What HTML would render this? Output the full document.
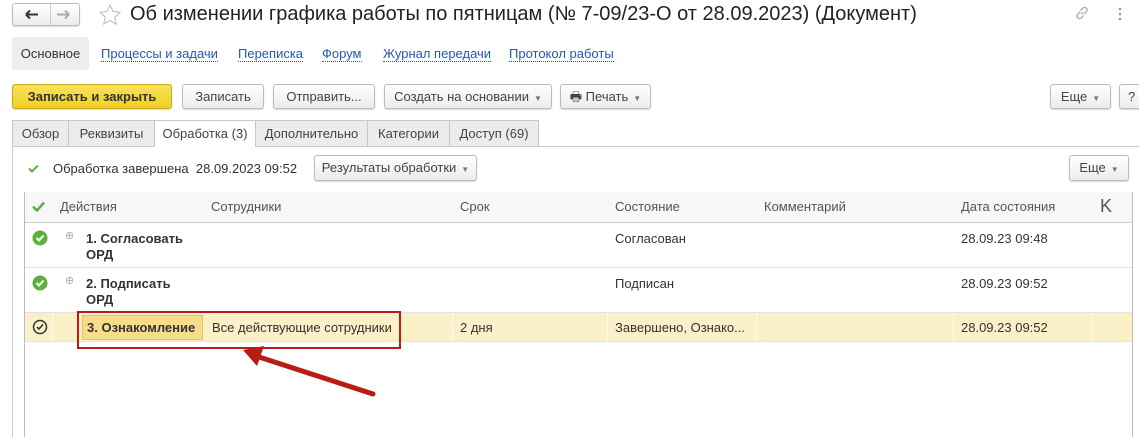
<!DOCTYPE html>
<html><head><meta charset="utf-8"><style>
*{box-sizing:border-box;margin:0;padding:0}
body{width:1139px;height:437px;overflow:hidden;background:#fff;font-family:"Liberation Sans",Arial,sans-serif;font-size:13px;color:#333;position:relative}
.a{position:absolute;white-space:nowrap}
.btn{position:absolute;border:1px solid #bbb;border-radius:3px;background:linear-gradient(#fff,#ececec);box-shadow:0 1px 1px rgba(0,0,0,.15);text-align:center;color:#444;font-size:13px}
.lnk{position:absolute;color:#1e5ab4;border-bottom:1px dotted #1e5ab4;line-height:14px;font-size:13px}
.tab{position:absolute;top:120px;height:27px;border:1px solid #c8c8c8;background:#ececec;line-height:25px;text-align:center;color:#444}
.hd{position:absolute;top:192px;height:30px;border-right:1px solid #ddd;line-height:29px;padding-left:8px;color:#555;background:#f7f7f7}
.dd{font-size:8px;color:#777;margin-left:5px}
</style></head><body>
<div class="btn" style="left:12px;top:3px;width:68px;height:23px">
<svg style="position:absolute;left:0;top:0" width="66" height="21" viewBox="0 0 66 21"><path d="M13 10.5h12M13 10.5l4-4M13 10.5l4 4" stroke="#333" stroke-width="2" fill="none"/><line x1="37.5" y1="0" x2="37.5" y2="21" stroke="#ccc"/><path d="M44 10.5h12M56 10.5l-4-4M56 10.5l-4 4" stroke="#aaa" stroke-width="2" fill="none"/></svg></div>
<svg class="a" style="left:99px;top:4px" width="22" height="21" viewBox="0 0 22 21"><path d="M11 1l3 6.5 7 .8-5.2 4.8 1.5 7L11 16.6 4.7 20.1l1.5-7L1 8.3l7-.8z" fill="none" stroke="#bbb" stroke-width="1"/></svg>
<div class="a" style="left:130px;top:3px;font-size:20px;color:#222">Об изменении графика работы по пятницам (№ 7-09/23-О от 28.09.2023) (Документ)</div>
<svg class="a" style="left:1074px;top:5px" width="16" height="16" viewBox="0 0 16 16"><path d="M7 9l2-2M6 7L3.5 9.5a2.5 2.5 0 003.5 3.5L9.5 10.5M10 9l2.5-2.5A2.5 2.5 0 009 3L6.5 5.5" fill="none" stroke="#aaa" stroke-width="1.3"/></svg>
<svg class="a" style="left:1118px;top:7px" width="4" height="14"><circle cx="2" cy="2" r="1.3" fill="#999"/><circle cx="2" cy="7" r="1.3" fill="#999"/><circle cx="2" cy="12" r="1.3" fill="#999"/></svg>
<div class="a" style="left:12px;top:37px;width:77px;height:33px;background:#eee;border-radius:3px;line-height:33px;text-align:center;color:#333">Основное</div>
<span class="lnk" style="left:101px;top:47px">Процессы и задачи</span>
<span class="lnk" style="left:238px;top:47px">Переписка</span>
<span class="lnk" style="left:322px;top:47px">Форум</span>
<span class="lnk" style="left:383px;top:47px">Журнал передачи</span>
<span class="lnk" style="left:509px;top:47px">Протокол работы</span>
<div class="btn" style="left:12px;top:84px;width:160px;height:25px;line-height:23px;background:linear-gradient(#f8e25a,#f1cf22);border-color:#c9ac19;font-weight:bold;color:#333">Записать и закрыть</div>
<div class="btn" style="left:182px;top:84px;width:82px;height:25px;line-height:23px">Записать</div>
<div class="btn" style="left:273px;top:84px;width:102px;height:25px;line-height:23px">Отправить...</div>
<div class="btn" style="left:384px;top:84px;width:168px;height:25px;line-height:23px">Создать на основании<span class="dd">▼</span></div>
<div class="btn" style="left:560px;top:84px;width:91px;height:25px;line-height:23px">🖶 Печать<span class="dd">▼</span></div>
<div class="btn" style="left:1050px;top:84px;width:61px;height:25px;line-height:23px">Еще<span class="dd">▼</span></div>
<div class="btn" style="left:1119px;top:84px;width:30px;height:25px;line-height:23px;text-align:left;padding-left:8px">?</div>
<div class="a" style="left:255px;top:146px;width:884px;height:1px;background:#c8c8c8"></div>
<div class="a" style="left:12px;top:146px;width:1px;height:291px;background:#c8c8c8"></div>
<div class="tab" style="left:12px;width:57px">Обзор</div>
<div class="tab" style="left:68px;width:87px">Реквизиты</div>
<div class="tab" style="left:154px;width:102px;background:#fff;border-bottom-color:#fff">Обработка (3)</div>
<div class="tab" style="left:255px;width:113px">Дополнительно</div>
<div class="tab" style="left:367px;width:83px">Категории</div>
<div class="tab" style="left:449px;width:90px">Доступ (69)</div>
<svg class="a" style="left:28px;top:164px" width="11" height="9"><path d="M1 4.5l3 3 6-6" stroke="#5cb040" stroke-width="2" fill="none"/></svg>
<div class="a" style="left:53px;top:161px">Обработка завершена&nbsp; 28.09.2023 09:52</div>
<div class="btn" style="left:314px;top:155px;width:163px;height:26px;line-height:24px">Результаты обработки<span class="dd">▼</span></div>
<div class="btn" style="left:1069px;top:155px;width:60px;height:26px;line-height:24px">Еще<span class="dd">▼</span></div>
<div class="a" style="left:24px;top:192px;width:1109px;height:245px;border:1px solid #bbb;border-bottom:none"></div>
<div class="hd" style="left:25px;width:28px"></div>
<svg class="a" style="left:32px;top:201px" width="13" height="11"><path d="M1 5.5l4 4 7-8" stroke="#5cb040" stroke-width="2.5" fill="none"/></svg>
<div class="hd" style="left:52px;width:152px">Действия</div>
<div class="hd" style="left:203px;width:250px">Сотрудники</div>
<div class="hd" style="left:452px;width:156px">Срок</div>
<div class="hd" style="left:607px;width:150px">Состояние</div>
<div class="hd" style="left:756px;width:198px">Комментарий</div>
<div class="hd" style="left:953px;width:139px">Дата состояния</div>
<div class="hd" style="left:1091px;width:41px;font-size:18px;padding-left:9px;border-right:none">K</div>
<div class="a" style="left:25px;top:222px;width:1107px;height:1px;background:#ccc"></div>
<div class="a" style="left:25px;top:267px;width:1107px;height:1px;background:#e2e2e2"></div>
<div class="a" style="left:25px;top:312px;width:1107px;height:30px;background:#fbf0c8;border-top:1px solid #e2e2e2;border-bottom:1px solid #e2e2e2"></div>
<div class="a" style="left:52px;top:313px;width:1px;height:28px;background:#fff"></div>
<div class="a" style="left:452px;top:313px;width:1px;height:28px;background:#fff"></div>
<div class="a" style="left:607px;top:313px;width:1px;height:28px;background:#fff"></div>
<div class="a" style="left:756px;top:313px;width:1px;height:28px;background:#fff"></div>
<div class="a" style="left:953px;top:313px;width:1px;height:28px;background:#fff"></div>
<div class="a" style="left:1091px;top:313px;width:1px;height:28px;background:#fff"></div>
<svg class="a" style="left:32px;top:230px" width="16" height="16"><circle cx="8" cy="8" r="7.5" fill="#5cb040"/><path d="M4.5 8l2.5 2.5 4.5-5" stroke="#fff" stroke-width="2" fill="none"/></svg>
<svg class="a" style="left:32px;top:275px" width="16" height="16"><circle cx="8" cy="8" r="7.5" fill="#5cb040"/><path d="M4.5 8l2.5 2.5 4.5-5" stroke="#fff" stroke-width="2" fill="none"/></svg>
<svg class="a" style="left:32px;top:319px" width="16" height="16"><circle cx="8" cy="8" r="6.5" fill="none" stroke="#333" stroke-width="1.5"/><path d="M5 8l2 2 4-4.5" stroke="#333" stroke-width="1.6" fill="none"/></svg>
<div class="a" style="left:65px;top:229px;font-size:11px;color:#aaa">⊕</div>
<div class="a" style="left:65px;top:274px;font-size:11px;color:#aaa">⊕</div>
<div class="a" style="left:86px;top:231px;font-weight:bold;line-height:16px">1. Согласовать<br>ОРД</div>
<div class="a" style="left:86px;top:276px;font-weight:bold;line-height:16px">2. Подписать<br>ОРД</div>
<div class="a" style="left:82px;top:315px;width:121px;height:25px;background:#f7dc8a;border:1px solid #ecc24a;font-weight:bold;line-height:23px;padding-left:4px">3. Ознакомление</div>
<div class="a" style="left:212px;top:320px">Все действующие сотрудники</div>
<div class="a" style="left:460px;top:320px">2 дня</div>
<div class="a" style="left:615px;top:231px">Согласован</div>
<div class="a" style="left:615px;top:276px">Подписан</div>
<div class="a" style="left:615px;top:320px">Завершено, Ознако...</div>
<div class="a" style="left:961px;top:231px">28.09.23 09:48</div>
<div class="a" style="left:961px;top:276px">28.09.23 09:52</div>
<div class="a" style="left:961px;top:320px">28.09.23 09:52</div>
<div class="a" style="left:77px;top:311px;width:324px;height:38px;border:2px solid #b81c14"></div>
<svg class="a" style="left:0;top:0" width="1139" height="437"><line x1="373" y1="394" x2="256" y2="356" stroke="#b81c14" stroke-width="5" stroke-linecap="round"/><path d="M243 350 L264 346 L257 366 Z" fill="#b81c14"/></svg>
</body></html>
